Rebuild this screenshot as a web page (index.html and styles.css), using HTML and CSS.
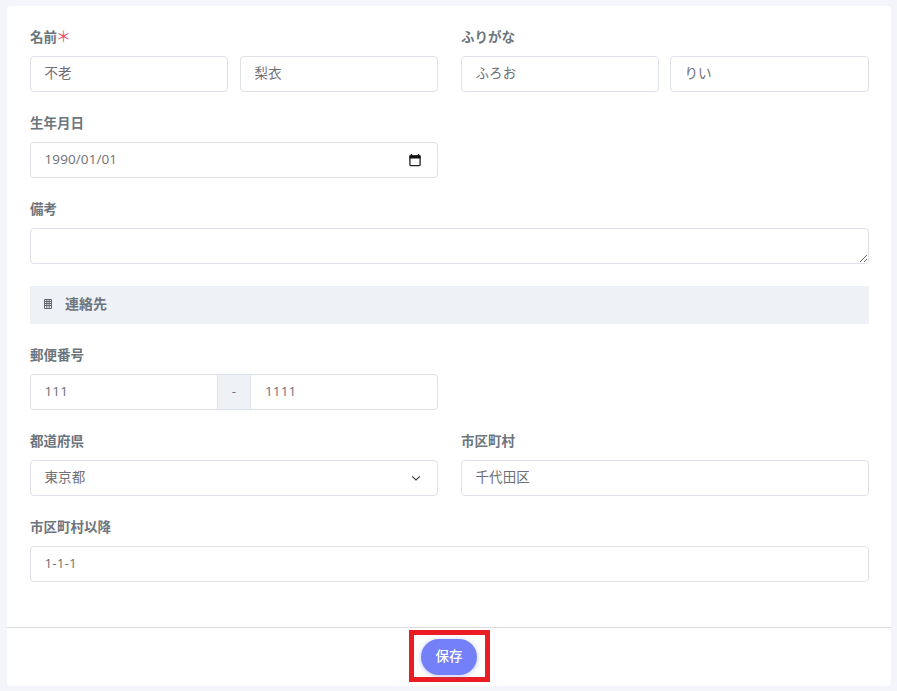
FILE: index.html
```html
<!DOCTYPE html>
<html lang="ja">
<head>
<meta charset="utf-8">
<title>編集</title>
<link rel="stylesheet" href="styles.css">
</head>
<body>
<main class="card">
  <form class="form">
    <div class="row">
      <div class="group">
        <div class="label">名前<span class="req">＊</span></div>
        <div class="pair">
          <div class="field">不老</div>
          <div class="field">梨衣</div>
        </div>
      </div>
      <div class="group">
        <div class="label">ふりがな</div>
        <div class="pair pair-right">
          <div class="field">ふろお</div>
          <div class="field">りい</div>
        </div>
      </div>
    </div>
    <div class="row">
      <div class="group">
        <div class="label">生年月日</div>
        <div class="field between">1990/01/01
          <svg class="cal" width="14" height="14" viewBox="0 0 14 14" aria-hidden="true"><path d="M3.5 1v2M10.5 1v2" stroke="#111" stroke-width="1.4" fill="none"/><rect x="1.9" y="2.9" width="10.2" height="9.7" rx=".8" fill="none" stroke="#222" stroke-width="1.3"/><rect x="1.5" y="2.5" width="11" height="3" fill="#111"/></svg>
        </div>
      </div>
    </div>
    <div class="row">
      <div class="group wide">
        <div class="label">備考</div>
        <textarea class="area"></textarea>
      </div>
    </div>
    <div class="section">
      <svg class="secicon" width="8" height="10" viewBox="0 0 8 10" aria-hidden="true"><path d="M.5 .5h7v9h-7zM.5 2.5h7M.5 4.5h7M.5 6.5h7M2.8 .5v9M5.2 .5v9" fill="none" stroke="#5f666f" stroke-width="1"/></svg>
      <span class="sectitle">連絡先</span>
    </div>
    <div class="row">
      <div class="group">
        <div class="label">郵便番号</div>
        <div class="zip">
          <div class="zip-a">111</div>
          <div class="zip-sep">-</div>
          <div class="zip-b">1111</div>
        </div>
      </div>
    </div>
    <div class="row">
      <div class="group">
        <div class="label">都道府県</div>
        <div class="field between">東京都
          <svg class="chev" width="12" height="12" viewBox="0 0 12 12" aria-hidden="true"><path d="M2.2 4.3 6 8l3.8-3.7" fill="none" stroke="#343a40" stroke-width="1.1"/></svg>
        </div>
      </div>
      <div class="group">
        <div class="label">市区町村</div>
        <div class="field">千代田区</div>
      </div>
    </div>
    <div class="row">
      <div class="group wide">
        <div class="label">市区町村以降</div>
        <div class="field">1-1-1</div>
      </div>
    </div>
  </form>
  <footer class="footer">
    <div class="highlight">
      <button class="save" type="button">保存</button>
    </div>
  </footer>
</main>
</body>
</html>
```
FILE: styles.css
```css
* { box-sizing: border-box; }
html, body { margin: 0; height: 100%; }
body {
  background: #f4f5fa;
  font-family: "Open Sans", "Noto Sans CJK JP", sans-serif;
  font-size: 13.5px;
  color: #6f7076;
  padding: 6px 6px 5px 7px;
  overflow: hidden;
}
.card {
  background: #fff;
  border-radius: 4px;
  height: 680px;
  display: flex;
  flex-direction: column;
}
.form {
  flex: 1;
  padding: 22px 22px 0 23px;
  display: flex;
  flex-direction: column;
}
.row {
  display: grid;
  grid-template-columns: 408px 408px;
  column-gap: 23px;
  margin-bottom: 22px;
}
.group { min-width: 0; }
.wide { grid-column: 1 / 3; }
.label {
  font-weight: 700;
  height: 18px;
  line-height: 18px;
  margin-bottom: 10px;
  color: #6c757d;
}
.req {
  color: #f0556e;
  font-weight: 400;
  font-size: 15px;
  line-height: 16px;
  margin-left: -1px;
}
.pair {
  display: grid;
  grid-template-columns: 198px 198px;
  column-gap: 12px;
}
.pair-right {
  grid-template-columns: 198px 199px;
  column-gap: 11px;
}
.field {
  height: 36px;
  border: 1px solid #dfe1e8;
  border-radius: 4px;
  padding: 0 15px 2px 13.5px;
  display: flex;
  align-items: center;
  background: #fff;
  line-height: 20px;
  letter-spacing: .1px;
}
.between { justify-content: space-between; }
.cal { margin: 2px 0 0; }
.chev { margin: 2px 0 0; }
.area {
  display: block;
  width: 100%;
  height: 36px;
  border: 1px solid #dfe1e8;
  border-radius: 4px;
  background: #fff;
  outline: none;
  margin: 0;
  padding: 6px 14px;
}
.section {
  height: 38px;
  background: #eef1f6;
  display: flex;
  align-items: center;
  gap: 13px;
  padding: 0 0 2px 14px;
  font-weight: 700;
  margin-bottom: 22px;
  color: #6c757d;
}
.sectitle { font-size: 14px; line-height: 16px; }
.zip {
  height: 36px;
  display: flex;
  border: 1px solid #dfe1e8;
  border-radius: 4px;
  overflow: hidden;
  line-height: 32px;
  letter-spacing: .1px;
}
.zip-a { width: 186px; padding-left: 13.5px; }
.zip-sep {
  width: 34px;
  background: #eef1f6;
  border-left: 1px solid #dfe1e8;
  border-right: 1px solid #dfe1e8;
  text-align: center;
}
.zip-b { flex: 1; padding-left: 14px; }
.footer {
  height: 59px;
  border-top: 1px solid #dcdde0;
  display: flex;
  justify-content: center;
}
.highlight {
  margin-top: 2px;
  width: 81px;
  height: 52px;
  border: 5px solid #ea1c24;
  padding-top: 2px;
  display: flex;
  align-items: center;
  justify-content: center;
}
.save {
  width: 56px;
  height: 36px;
  border: 0;
  border-radius: 18px;
  background: #7380f7;
  color: #fff;
  font: 500 13.5px/1 "Open Sans", "Noto Sans CJK JP", sans-serif;
  box-shadow: 0 1px 5px rgba(115, 128, 247, .45);
  padding: 0;
}
```
